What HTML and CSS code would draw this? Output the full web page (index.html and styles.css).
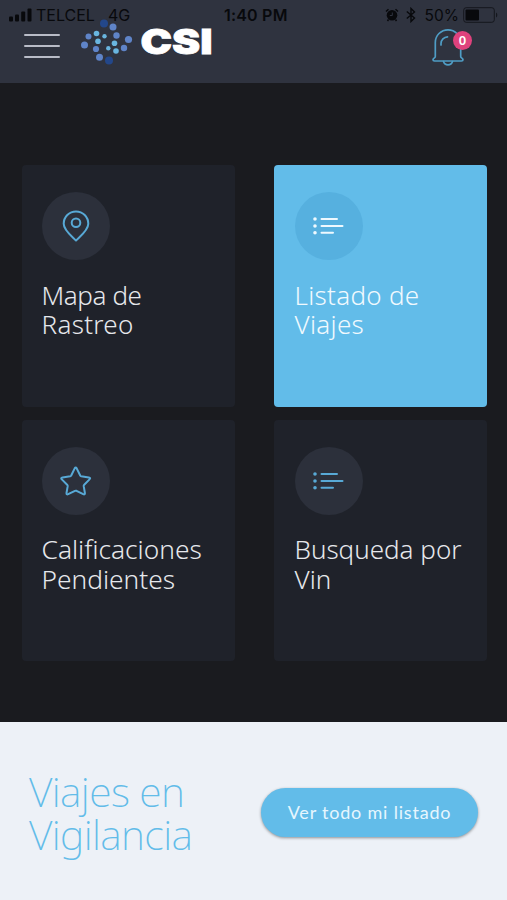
FILE: index.html
```html
<!DOCTYPE html>
<html lang="es">
  <head>
    <meta charset="UTF-8" />
    <meta name="viewport" content="width=device-width, initial-scale=1.0" />
    <title>CSI</title>
    <link rel="stylesheet" href="styles.css">
  </head>
  <body>
    <header class="header">
      <div class="status-bar">
        <div class="status-left">
          <svg width="23" height="14" viewBox="0 0 23 14">
            <rect x="0" y="8.5" width="4" height="5" rx="1" />
            <rect x="6" y="6.5" width="4" height="7" rx="1" />
            <rect x="12.2" y="3.5" width="4" height="10" rx="1" />
            <rect x="18.5" y="0.5" width="4" height="13" rx="1" />
          </svg>
          <span class="carrier">TELCEL</span>
          <span class="network">4G</span>
        </div>
        <span class="clock">1:40 PM</span>
        <div class="status-right">
          <svg width="14" height="14" viewBox="0 0 14 14">
            <circle cx="7" cy="7.3" r="5.3" />
            <path d="M1 3.5 3.5 1.2M13 3.5 10.5 1.2M3.5 11.5 2.5 13M10.5 11.5 11.5 13" stroke="#08090c" stroke-width="1.5" />
            <path d="M7.3 4.5V7.5H4.8" fill="none" stroke="#2f333f" stroke-width="1" />
          </svg>
          <svg width="10" height="16" viewBox="0 0 10 16">
            <path d="M.8 4.5 8.5 11 5 14.5V1.5L8.5 5 .8 11.5" fill="none" stroke="#08090c" stroke-width="1.4" />
          </svg>
          <span class="percent">50%</span>
          <svg width="36" height="16" viewBox="0 0 36 16">
            <rect x=".7" y=".7" width="30.6" height="14.6" rx="2.5" fill="none" stroke="#15171d" stroke-width="1" />
            <rect x="2.5" y="2.5" width="13.5" height="11" rx="1" />
            <path d="M33 5.500a3 3 0 0 1 0 5z" fill="#15171d" />
          </svg>
        </div>
      </div>

      <button class="menu-btn" aria-label="Menu">
        <span></span>
        <span></span>
        <span></span>
      </button>

      <svg class="logo" width="134" height="48" viewBox="80 18 134 48">
        <g fill="#5f84c8">
          <circle cx="113" cy="27" r="3.5" />
          <circle cx="88.5" cy="36.5" r="3" />
          <circle cx="116.5" cy="35.5" r="3.2" />
          <circle cx="128.5" cy="39.5" r="3.6" />
          <circle cx="84.5" cy="45" r="3.5" />
          <circle cx="96" cy="49" r="3.1" />
          <circle cx="124" cy="48" r="3.2" />
          <circle cx="99.5" cy="57.3" r="3.5" />
        </g>
        <g fill="#69b5df">
          <circle cx="96.5" cy="33.5" r="2.8" />
          <circle cx="104.5" cy="36.2" r="2.2" />
          <circle cx="98" cy="41.3" r="2.8" />
          <circle cx="114.5" cy="43.3" r="2.8" />
          <circle cx="108.3" cy="48.3" r="2.2" />
          <circle cx="116" cy="51" r="2.8" />
        </g>
        <g fill="#23478a">
          <circle cx="104" cy="23.5" r="4" />
          <circle cx="109" cy="60.5" r="4" />
        </g>
        <text class="logo-text" x="140.5" y="54.2" textLength="72" lengthAdjust="spacingAndGlyphs">CSI</text>
      </svg>

      <div class="bell">
        <svg width="34" height="40" viewBox="0 0 34 40">
          <path d="M4.3 28.5V14.5A12.7 12.7 0 0 1 29.7 14.5V28.5C29.7 30 32 30.3 32 31.7Q32 33 30.5 33H3.5Q2 33 2 31.7C2 30.3 4.3 30 4.3 28.5Z" />
          <path d="M12.5 33.5a4.7 4.7 0 0 0 9 0" />
          <path d="M10 17V15.5a6.8 6.8 0 0 1 6.5-6.6" />
        </svg>
        <span class="badge">0</span>
      </div>
    </header>

    <main class="grid">
      <a class="card">
        <span class="icon">
          <svg width="32" height="32" viewBox="0 0 32 32">
            <path d="M16 30.500C13 27.200 3.700 20.500 3.700 13.700A12.300 12.300 0 0 1 28.300 13.700C28.300 20.500 19 27.200 16 30.500Z" />
            <circle cx="16" cy="12.7" r="4.3" />
          </svg>
        </span>
        <h2><span class="tight">Mapa de</span><span class="wide">Rastreo</span></h2>
      </a>
      <a class="card active">
        <span class="icon">
          <svg width="32" height="20" viewBox="0 0 32 20">
            <path d="M8.500 3H24M8.500 10H29.500M8.500 16.700H20" />
            <path class="dots" d="M2 3h0M2 10h0M2 16.700h0" />
          </svg>
        </span>
        <h2><span class="wide">Listado de</span><span class="wide">Viajes</span></h2>
      </a>
      <a class="card">
        <span class="icon">
          <svg width="32" height="32" viewBox="0 0 32 32">
            <path d="M14.700 3.400Q15.700 1.800 16.700 3.400L20.200 10.500Q20.500 11 21.200 11.200L28.800 12.400Q31 12.900 29.500 14.400L24 20Q23.600 20.500 23.700 21.200L24.900 28Q25 30 23.200 29.200L16.500 25.800Q15.700 25.500 15 25.800L8.200 29.200Q6.400 30 6.500 28L7.700 21.200Q7.800 20.500 7.400 20L1.800 14.400Q.4 12.900 2.600 12.400L10.200 11.200Q10.900 11 11.200 10.500Z" />
          </svg>
        </span>
        <h2><span class="large">Calificaciones</span><span class="large">Pendientes</span></h2>
      </a>
      <a class="card">
        <span class="icon">
          <svg width="32" height="20" viewBox="0 0 32 20">
            <path d="M8.500 3H24M8.500 10H29.500M8.500 16.700H20" />
            <path class="dots" d="M2 3h0M2 10h0M2 16.700h0" />
          </svg>
        </span>
        <h2><span>Busqueda por</span><span>Vin</span></h2>
      </a>
    </main>

    <section class="trips">
      <h1><span>Viajes en</span><span>Vigilancia</span></h1>
      <button class="list-btn">Ver todo mi listado</button>
    </section>
  </body>
</html>
```
FILE: styles.css
```css
* {
  box-sizing: border-box;
}

body {
  margin: 0;
  height: 900px;
  display: flex;
  flex-direction: column;
  overflow: hidden;
  background-color: #1a1b1f;
  font-family: "Noto Sans", sans-serif;
}

.header {
  position: relative;
  height: 83px;
  padding: 0 32px 0 24px;
  display: flex;
  align-items: flex-start;
  background-color: #2f333f;
}

/* the system bar is drawn over the header */
.status-bar {
  position: absolute;
  top: 0;
  left: 0;
  width: 100%;
  height: 30px;
  padding: 0 8px 0 9px;
  display: flex;
  align-items: center;
  font-family: Inter, sans-serif;
  font-size: 16px;
  color: #08090c;
  fill: #08090c;
}

.status-left,
.status-right {
  display: flex;
  align-items: center;
}

.status-left {
  width: 215px;
}

.status-right {
  margin-left: auto;
}

.carrier {
  margin-left: 4px;
}

.network {
  margin-left: 13px;
}

.clock {
  font-weight: 600;
  letter-spacing: 0.2px;
}

.status-right svg:nth-child(2) {
  margin-left: 7px;
}

.percent {
  margin: 0 4px 0 9px;
  font-size: 15.5px;
}

.menu-btn {
  width: 36px;
  margin-top: 34px;
  padding: 0;
  border: none;
  background: none;
  display: flex;
  flex-direction: column;
  gap: 9px;
}

.menu-btn span {
  height: 2px;
  border-radius: 1px;
  background-color: #b9bcc7;
}

.logo {
  margin: 18px 0 0 20px;
}

.logo-text {
  font-family: Inter, sans-serif;
  font-size: 34px;
  font-weight: 900;
  fill: #fff;
  stroke: #fff;
  stroke-width: 0.8;
}

.bell {
  position: relative;
  width: 44px;
  height: 40px;
  margin: 28px 0 0 auto;
}

.bell svg {
  fill: none;
  stroke: #4f9dc5;
  stroke-width: 1.7;
  stroke-linecap: round;
}

.badge {
  position: absolute;
  top: 3px;
  left: 22px;
  width: 19px;
  height: 19px;
  border-radius: 50%;
  background-color: #df427d;
  color: #fff;
  font-size: 13px;
  font-weight: 600;
  line-height: 19px;
  text-align: center;
}

.grid {
  display: grid;
  grid-template-columns: 213px 213px;
  grid-template-rows: 241.5px 241px;
  gap: 13px 39px;
  height: 639px;
  padding: 82px 20px 0 22px;
}

.card {
  padding: 27px 0 0 19.5px;
  border-radius: 4px;
  background-color: #1f222a;
  color: #e6e8ec;
}

.card.active {
  background-color: #62bce9;
  color: #f0f9fe;
}

.icon {
  width: 68px;
  height: 68px;
  border-radius: 50%;
  display: flex;
  align-items: center;
  justify-content: center;
  background-color: #2c303b;
}

.icon svg {
  fill: none;
  stroke: #58a9d6;
  stroke-width: 2;
  stroke-linecap: round;
  stroke-linejoin: round;
}

.icon .dots {
  stroke-width: 3.6;
}

.card:nth-child(even) {
  padding-left: 20.5px;
}

.active .icon {
  background-color: #56b0df;
}

.active .icon svg {
  stroke: #eef9ff;
}

.card h2 {
  margin: 20.5px 0 0;
  font-size: 26px;
  font-weight: 300;
  line-height: 29.5px;
  white-space: nowrap;
}

h1 span,
h2 span {
  display: block;
}

.tight {
  letter-spacing: -0.4px;
}

.wide {
  letter-spacing: 0.3px;
}

.large {
  font-size: 26.3px;
}

.trips {
  flex: 1;
  padding: 0 29px 0 29px;
  display: flex;
  justify-content: space-between;
  background-color: #edf1f7;
}

.trips h1 {
  margin: 48px 0 0;
  color: #62bce9;
  font-size: 41px;
  font-weight: 200;
  letter-spacing: -0.6px;
  line-height: 43px;
  white-space: nowrap;
}

.list-btn {
  width: 217px;
  height: 49px;
  margin-top: 66px;
  padding: 0 0 2px;
  border: none;
  border-radius: 25px;
  background-color: #62bce9;
  box-shadow: 0 1px 3px rgba(0, 0, 0, 0.4);
  color: #e6f6fe;
  font-family: Lato, sans-serif;
  font-size: 18px;
  letter-spacing: 0.8px;
}
```
